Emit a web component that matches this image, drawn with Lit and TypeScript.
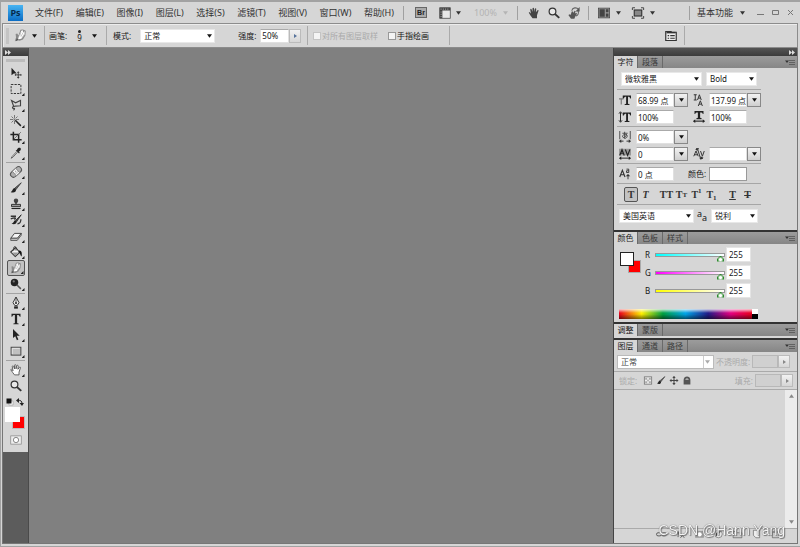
import { LitElement, html, css, svg, nothing } from "lit";
import { customElement, property } from "lit/decorators.js";

const glyphs: Record<string, unknown> = {
  move: svg`<path d="M2 1v10l3-2.500h4z" fill="#222"/><path d="M11 7v7M7.500 10.500h7" stroke="#333" stroke-width="1.200"/><path d="M11 5.500l1.800 2.200H9.200zM11 15.500l1.800-2.200H9.200zM6 10.500l2-1.600v3.200zM16 10.500l-2-1.600v3.200z" fill="#333"/>`,
  marquee: svg`<rect x="1.500" y="2" width="13" height="12" fill="none" stroke="#333" stroke-width="1.300" stroke-dasharray="3 1.500"/>`,
  lasso: svg`<path d="M5 10L2 2l5.500 3L14 2v7l-7 .500-2 .500c-2.500 0-2 3 0 2.500s1 1.500-.500 2.500" fill="none" stroke="#444" stroke-width="1.500"/>`,
  wand: svg`<path d="M7 7l7.500 7.500" stroke="#222" stroke-width="2"/><path d="M6 0v4M6 8v4M0 6h4M8 6h4M2 2l2.500 2.500M10 2L7.500 4.500M2 10l2.500-2.500" stroke="#555"/><circle cx="6" cy="6" r="1.200" fill="#777"/>`,
  crop: svg`<path d="M4.500 1v10.500H15.500M.500 4.500h11V15.500" fill="none" stroke="#222" stroke-width="2"/><path d="M5 11l9.500-9.500" stroke="#555"/>`,
  dropper: svg`<path d="M9 6l-6 6.500-1.500 2.500 2.500-1.500L10 7z" fill="#eee" stroke="#444"/><path d="M7.500 4l4.500 4.500 1-1-1-1.500c4-2 3-6.500-1.500-4.500L9 4z" fill="#222"/>`,
  heal: svg`<g transform="rotate(-42 8 8)"><rect x="-.500" y="4" width="17" height="8" rx="4" fill="#b0b0b0" stroke="#555" stroke-width="1.300"/><rect x="5" y="4" width="6" height="8" fill="#f2f2f2" stroke="#777"/></g><path d="M7 7h1M9 8h1M7.500 9.500h1" stroke="#555"/>`,
  brush: svg`<path d="M15 1L6.500 8l1.500 2z" fill="#666" stroke="#333"/><path d="M6 8c-2 0-2 3-5 5.500C5 15 8.500 13.500 8 10z" fill="#222"/>`,
  stamp: svg`<circle cx="8" cy="3.500" r="3" fill="#444"/><path d="M7 5h2v3.500H7z" fill="#333"/><path d="M2 8.500h12v3H2z" fill="#999" stroke="#333" stroke-width="1.300"/><path d="M2 14h12" stroke="#222" stroke-width="1.500"/>`,
  history: svg`<path d="M15 1L8 8l1 2z" fill="#555" stroke="#222"/><path d="M7 8c-2 1-2 4-5 5 4 1.500 7 0 7-3z" fill="#222"/><path d="M1 3h7M1 6.500c5-2 8-2 5 1M10 13c3 0 4.500-2 4.500-6" fill="none" stroke="#333" stroke-width="1.700"/>`,
  eraser: svg`<path d="M1 11l5-6.500h9L10 11z" fill="#f4f4f4" stroke="#444" stroke-width="1.300"/><path d="M1 11v3h8.500l5.500-7V4.500L10 11z" fill="#bbb" stroke="#444"/>`,
  bucket: svg`<path d="M1 8l6.500-6 5.500 6.500-6 5.500z" fill="#f2f2f2" stroke="#333" stroke-width="1.400"/><path d="M3 8.500h9l-5 4.500z" fill="#999"/><path d="M5 6V3c0-3 3-3 3 0v3" fill="none" stroke="#333" stroke-width="1.300"/><path d="M12 6c4 0 4 3 3.500 8-2-1-1.500-5-4-5z" fill="#111"/>`,
  smudge: svg`<path d="M1 15l1.500-4.500L2 6l2-.500L5.500 8 8 1l3-.500L14.500 2l-.500 6-3 5-4 1.500-3-1z" fill="#8a8a8a"/><path d="M5 12.500L6 9l3-7 2-.500v3l2-2v4.500L9 12z" fill="#fff"/><path d="M8.500 4L7 9M11 4.500L8.500 9.500M13 6l-3 4.500" stroke="#aaa" stroke-width=".8"/><path d="M2 15l1.500-3.500 2 2z" fill="#555"/>`,
  burn: svg`<circle cx="6" cy="6" r="5" fill="#222"/><circle cx="5" cy="4.500" r="1.500" fill="#777"/><path d="M9 9l5.500 5.500" stroke="#555" stroke-width="2"/>`,
  pen: svg`<path d="M8 0L4 7.500l2.500 4h3l2.500-4z" fill="#eee" stroke="#333" stroke-width="1.300"/><path d="M8 1v6" stroke="#333"/><circle cx="8" cy="8" r="1.300" fill="#222"/><path d="M5.500 12.500h5V15.500h-5z" fill="#222"/>`,
  type: svg`<path d="M2 1h12v4h-1c-.400-2-1-2.500-3.500-2.500V12.500c0 1 .500 1.300 2 1.500v1H4.500v-1c1.500-.200 2-.500 2-1.500V2.500C4 2.500 3.400 3 3 5H2z" fill="#222"/>`,
  arrow: svg`<path d="M4 0v12l3-2.500L9.200 15l2-1-2.200-5h4z" fill="#222"/>`,
  shape: svg`<rect x="1.500" y="3" width="13" height="10.500" fill="#c0c0c0" stroke="#444" stroke-width="1.300"/><path d="M3 12V4.500H13" fill="none" stroke="#eee"/>`,
  hand: svg`<path d="M6 14.500C4 12 2.500 10 1 7.500c1-1 2 0 3 1.500L3 3.500C3 2 4.500 2 5 3.500l1 3V2c0-1.500 2-1.500 2 0v4.500l1-4c.500-1.300 2-1 2 .300L10.500 7l2-2.500c1-1 2 0 1.300 1L12 11v3.500z" fill="#fff" stroke="#555" stroke-width="1.200"/>`,
  handDark: svg`<path d="M6 15C4 12 2.500 10 1 7.500c1-1 2 0 3 1.500L3 3.500C3 2 4.500 2 5 3.500l1 3V2c0-1.500 2-1.500 2 0v4.500l1-4c.500-1.300 2-1 2 .300L10.500 7l2-2.500c1-1 2 0 1.300 1L12 11v4z" fill="#444"/>`,
  zoom: svg`<circle cx="6" cy="6" r="4.500" fill="#e8e8e8" stroke="#333" stroke-width="1.600"/><path d="M9.500 9.500l5.500 5" stroke="#333" stroke-width="2.600"/>`,
  rotate: svg`<path d="M4 15.500l-3.500-5 2-1 1 1L5 6l1.700 0 .500 2 1.500-3 1.500.500-1 3 2-1 .700 1.500L9.500 13l-1 2.500z" fill="#555"/><path d="M5 5c1-4.500 6.500-5 9-2M13.500 5c1 3 0 6-3 7" fill="none" stroke="#666" stroke-width="1.500"/><path d="M15.500 0v6H10z" fill="#555"/>`,
  mini: svg`<rect x="6" y="6" width="8" height="8" fill="#fff" stroke="#888"/><rect x="1" y="1" width="10" height="10" fill="#111"/>`,
  swap: svg`<path d="M4 5c5-1 8 1 8 6" fill="none" stroke="#222" stroke-width="2"/><path d="M0 5l6-5v10zM7 10h9l-4 6z" fill="#222"/>`,
  mask: svg`<rect x="1" y="2.500" width="14" height="11" fill="#eee" stroke="#888"/><circle cx="8" cy="8" r="3.500" fill="#fff" stroke="#666"/>`,
  screens: svg`<rect x="1" y="1" width="14" height="14" fill="#e8e8e8" stroke="#444"/><path d="M1 1h14v3.500H1zM1 4h3.500v11H1z" fill="#444"/><path d="M2 2.800h12M2.800 6v8" stroke="#ccc" stroke-dasharray="1.500 1.500"/>`,
  arrange: svg`<rect x=".500" y="1.500" width="15" height="13" fill="#999" stroke="#444"/><path d="M2 3h7v10H2zM10.500 3H14v4h-3.500zM10.500 8.500H14V13h-3.500z" fill="#444"/>`,
  full: svg`<rect x="3" y="4" width="10" height="8" fill="#888" stroke="#333" stroke-width="1.500"/><path d="M.500 4V1H4M12 1h3.500v3M15.500 12v3H12M4 15H.500v-3" fill="none" stroke="#444" stroke-width="1.300"/>`,
  palette: svg`<path d="M1 2h7l1 1h6v11H1z" fill="#eee" stroke="#333" stroke-width="1.600"/><path d="M2 3.500h12" stroke="#333" stroke-width="2"/><path d="M3.500 7.500h2M3.500 11h2M7 7.500h6M7 11h6" stroke="#333" stroke-width="1.400"/>`,
  size: svg`<path d="M5 2h11v4h-1c-.300-2-1-2.500-3-2.500V13l2 .500v1H7.500v-1l2-.500V3.500c-2 0-2.700.500-3 2.500H5z" fill="#222"/><path d="M0 6.500h6M3 6.500V14" stroke="#777" stroke-width="1.500"/>`,
  vscale: svg`<path d="M5 2h11v4h-1c-.300-2-1-2.500-3-2.500V13l2 .500v1H7.500v-1l2-.500V3.500c-2 0-2.700.500-3 2.500H5z" fill="#222"/><path d="M2 2v12M0 3.500L2 1l2 2.500M0 12.500L2 15l2-2.500" fill="none" stroke="#222" stroke-width="1.300"/>`,
  hscale: svg`<path d="M2 0h12v4h-1c-.300-2-1-2-3.500-2v7l2 .500V11h-7V9.500l2-.500V2C4 2 3.300 2 3 4H2z" fill="#222"/><path d="M1 13.500h14" stroke="#222" stroke-width="1.500"/><path d="M0 13.500l3-2.500v5zM16 13.500L13 11v5z" fill="#222"/>`,
  leading: svg`<path d="M3 1v7M1 1h4M1 8h4M6 8l2.500-7L11 8M7 5.500h3M7 16l2.800-7 2.700 7M8 13.500h3.500" fill="none" stroke="#333" stroke-width="1.300"/>`,
  tsume: svg`<path d="M1 0v11M15 0v11M4.500 3h7M7.500 1v8M5 8c-2-4 7-4 6-1-.500 2-2 3-4 3M10 4c0 3-2 5-5 5" fill="none" stroke="#444" stroke-width="1.200"/><path d="M1 13.500h5M10 13.500h5" stroke="#333" stroke-width="1.300"/><path d="M0 13.500L3 11v5zM16 13.500L13 11v5z" fill="#333"/>`,
  tracking: svg`<rect y="1" width="16" height="9" fill="#999"/><path d="M1 10l3-8 3 8M2 7h4M8.500 2l3 8 3-8" fill="none" stroke="#222" stroke-width="1.500"/><path d="M1 13.500h14" stroke="#222" stroke-width="1.300"/><path d="M0 13.500L3 11v5zM16 13.500L13 11v5z" fill="#222"/>`,
  kern: svg`<path d="M1 11l3-7 3 7M2 9h4M10 4l2.500 7L15 4M6 1l4 13M8 1H4M9 14h4" fill="none" stroke="#333" stroke-width="1.300"/><path d="M3 2l3-2v4zM14 13l-4-2v5z" fill="#333"/>`,
  baseline: svg`<path d="M1 12l3.500-9L8 12M2.500 9h4" fill="none" stroke="#333" stroke-width="1.500"/><path d="M10 1.500h3V6h-3V3.700h3M12 9v6" fill="none" stroke="#333" stroke-width="1.200"/><path d="M9 11l3-3 3 3z" fill="#333"/>`,
  pixels: svg`<rect x="1.500" y="1.500" width="13" height="13" fill="#eee" stroke="#777" stroke-width="1.500"/><path d="M3 3h3.500v3.500H3zM9.500 3H13v3.500H9.500zM6.500 6.500h3v3h-3zM3 9.500h3.500V13H3zM9.500 9.500H13V13H9.500z" fill="#aaa"/>`,
  cross: svg`<path d="M8 1v14M1 8h14" stroke="#444" stroke-width="1.800"/><path d="M8 0l3 3.500H5zM8 16l3-3.500H5zM0 8l3.500-3v6zM16 8l-3.500-3v6z" fill="#444"/>`,
  lock: svg`<path d="M2 15V7c0-8 12-8 12 0v8z" fill="#555"/><path d="M5 7c0-4 6-4 6 0z" fill="#aaa"/>`,
  link: svg`<rect x="0" y="6" width="8" height="5" rx="2.500" fill="none" stroke="#555" stroke-width="1.500"/><rect x="8" y="6" width="8" height="5" rx="2.500" fill="none" stroke="#555" stroke-width="1.500"/>`,
  fx: svg`<path d="M8 2C5 1 5 6 4 13M2 6h5M8 7l6 7M14 7l-6 7" fill="none" stroke="#555" stroke-width="1.500"/>`,
  addMask: svg`<rect x="1" y="3" width="14" height="11" fill="#999"/><circle cx="8" cy="8.500" r="3.500" fill="#fff"/>`,
  adjust: svg`<circle cx="8" cy="8" r="6" fill="#eee" stroke="#555"/><path d="M4 12A6 6 0 0 1 12 4z" fill="#444"/>`,
  folder: svg`<path d="M1 14V4h5l1 2h8v8z" fill="#ccc" stroke="#555"/>`,
  page: svg`<path d="M3 2h10v12H7l-4-4z" fill="#eee" stroke="#555"/>`,
  trash: svg`<path d="M3 5h10v9H3zM1 4.500h14M6 2h4" fill="#ccc" stroke="#555"/>`,
};

@customElement("ps-icon")
export class PsIcon extends LitElement {
  static styles = css`
    :host { display: inline-flex; flex: none; width: 12px; height: 12px; }
    svg { width: 100%; height: 100%; display: block; overflow: visible; }
  `;
  @property() name = "";
  render() {
    return html`<svg viewBox="0 0 16 16" fill="none" aria-hidden="true">${glyphs[this.name] ?? nothing}</svg>`;
  }
}

const menus = ["文件(F)", "编辑(E)", "图像(I)", "图层(L)", "选择(S)", "滤镜(T)", "视图(V)", "窗口(W)", "帮助(H)"];

const toolGroups: string[][] = [
  ["move", "marquee", "lasso", "wand", "crop", "dropper"],
  ["heal", "brush", "stamp", "history", "eraser", "bucket", "smudge", "burn"],
  ["pen", "type", "arrow", "shape"],
  ["hand", "zoom"],
];

const channels = [
  { name: "R", tone: "cyan" },
  { name: "G", tone: "magenta" },
  { name: "B", tone: "yellow" },
];

const caret = html`<svg class="caret" viewBox="0 0 6 4" aria-hidden="true"><path d="M0 0h6L3 4z" fill="currentColor"/></svg>`;

@customElement("app-root")
export class AppRoot extends LitElement {
  static styles = css`
    * { box-sizing: border-box; }
    :host {
      box-sizing: border-box;
      display: flex; flex-direction: column; height: 100vh; min-height: 540px;
      background: #d6d6d6; color: #161616; overflow: hidden;
      border: solid #a2a2a2; border-width: 2px 0 1px 1px; padding: 0 2px 2px 1px;
      font: 8px/12px "Noto Sans", "Noto Sans CJK SC", sans-serif;
    }
    button, input, select { font: inherit; color: inherit; margin: 0; padding: 0; border: 0; border-radius: 0; background: none; min-width: 0; }
    button { display: inline-flex; align-items: center; justify-content: center; white-space: nowrap; }
    .caret { width: 5px; height: 4px; flex: none; display: block; }
    .rule { flex: none; width: 1px; height: 14px; background: #a0a0a0; }

    .menubar { display: flex; align-items: center; height: 21px; flex: none; padding-left: 6px; font-size: 9px; color: #333; }
    .logo { width: 15px; height: 16px; flex: none; background: linear-gradient(#49b4f2, #0a6cc4); color: #062a4c; font: bold 9px/15px "Open Sans", sans-serif; text-align: center; }
    .menus { display: flex; justify-content: space-between; margin: 0 9px 0 12px; width: 359px; flex: none; }
    .bar-group { display: flex; align-items: center; flex: none; }
    .bridge { width: 12px; height: 11px; border: 1px solid #666; background: #aaa; font: bold 7px/9px "Liberation Sans", sans-serif; color: #222; margin: 0 12px 0 11px; }
    .view { gap: 5px; }
    .percent { margin-left: 13px; gap: 6px; color: #b4b4b4; }
    .nav-rule { margin-left: 9px; }
    .nav-tools { gap: 8px; padding: 0 8px 0 10px; }
    .screen { gap: 6px; padding-left: 9px; }
    .screen .second { margin-left: 5px; }
    .workspace-menu { margin-left: auto; gap: 7px; }
    .workspace-menu button { gap: 7px; }
    .window-buttons { display: flex; gap: 8px; margin: 0 4px 0 12px; }
    .window-buttons svg { width: 7px; height: 7px; }

    .options { display: flex; align-items: stretch; height: 25px; flex: none; border: 1px solid #8c8c8c; box-shadow: inset 1px 1px #ececec; }
    .seg { display: flex; align-items: center; flex: none; border-right: 1px solid #aaa; margin: 2px 0; }
    .seg-tool { width: 42px; gap: 5px; padding-left: 3px; }
    .seg-tool ps-icon { width: 13px; height: 13px; }
    .grip { width: 3px; height: 16px; background: #c4c4c4; }
    .seg-brush { width: 62px; padding-left: 4px; }
    .tip { display: grid; justify-items: center; margin: 0 10px 0 10px; line-height: 9px; }
    .dot { width: 3px; height: 3px; border-radius: 50%; background: #222; }
    .seg-mode { width: 201px; padding-left: 6px; }
    .seg-mode .select { width: 75px; margin: 0 23px 0 9px; }
    .seg-mode .field { width: 29px; margin-left: 4px; }
    .seg-checks { width: 142px; gap: 10px; padding-left: 5px; }
    .check { display: flex; align-items: center; gap: 1px; white-space: nowrap; }
    .check input { appearance: none; width: 8px; height: 8px; border: 1px solid #999; background: #f4f4f4; }
    .check.off { color: #aaa; }
    .check.off input { border-color: #c4c4c4; }
    .seg-palette { margin-left: auto; width: 20px; }
    .seg-tail { width: 112px; border: 0; }

    .select { display: grid; grid-template-columns: minmax(0, 1fr) 5px; align-items: center; height: 14px; background: #fff; border: 1px solid #e8e8e8; padding-right: 2px; }
    .select select { grid-area: 1 / 1 / 2 / 3; appearance: none; height: 12px; padding-left: 3px; outline: 0; }
    .select .caret { grid-area: 1 / 2; pointer-events: none; }
    .field { height: 14px; background: #fff; border: 1px solid #e0e0e0; border-top-color: #aaa; padding-left: 1px; width: 38px; }
    .combo { display: flex; height: 14px; }
    .drop { width: 14px; height: 14px; border: 1px solid #888; background: linear-gradient(#f2f2f2, #cfcfcf); color: #111; flex: none; }
    .step { width: 12px; height: 14px; border: 1px solid #bbb; background: linear-gradient(#f2f2f2, #d6d6d6); flex: none; }
    .step svg { width: 3px; height: 4px; color: #57739c; }

    .work { display: flex; flex: 1; min-height: 0; border-right: 1px solid #777; border-left: 1px solid #777; border-bottom: 1px solid #777; }
    .dock { height: 8px; flex: none; background: linear-gradient(#555, #3c3c3c); color: #ddd; display: flex; align-items: center; padding: 0 2px; }
    .dock svg { width: 6px; height: 5px; }
    .dock.end { justify-content: flex-end; }
    .left { width: 26px; flex: none; background: #5c5c5c; border-right: 1px solid #4a4a4a; }
    .tools { background: #d6d6d6; padding: 3px 3px 4px 3px; display: grid; }
    .tools .handle { height: 3px; background: #bcbcbc; margin-bottom: 3px; }
    .tool-group { display: grid; justify-items: center; }
    .tool-group + .tool-group { border-top: 1px solid #a2a2a2; margin-top: 1px; padding-top: 1px; }
    .tool { position: relative; width: 18px; height: 16px; }
    .tool.active { border: 1px solid #555; border-radius: 2px; background: #c2c2c2; }
    .flyout { position: absolute; right: 0; bottom: 1px; width: 3px; height: 3px; background: #222; clip-path: polygon(100% 0, 100% 100%, 0 100%); }
    .minis { display: flex; justify-content: space-between; padding: 4px 1px 0 0; }
    .minis ps-icon { width: 8px; height: 8px; }
    .swatches { position: relative; height: 22px; margin: 1px 0 3px; }
    .swatch { position: absolute; border: 1px solid #bbb; }
    .swatch.back { width: 13px; height: 13px; right: 0; bottom: 0; background: #f00; }
    .swatch.front { width: 15px; height: 15px; left: -1px; top: 0; background: #fff; border-color: #fff; }
    .mask { height: 16px; }
    .canvas { flex: 1; min-width: 0; background: #808080; }

    .right { width: 184px; flex: none; display: flex; flex-direction: column; background: #d6d6d6; border-left: 1px solid #444; }
    .panel { display: flex; flex-direction: column; flex: none; border-bottom: 2px solid #333; }
    .tabs { display: flex; height: 12px; flex: none; background: linear-gradient(#9c9c9c, #868686); align-items: stretch; }
    .tab { width: 25px; border-right: 1px solid #6a6a6a; color: #3a3a3a; }
    .tab.on { width: 24px; background: #d6d6d6; color: #222; }
    .flymenu { margin-left: auto; width: 14px; }
    .flymenu svg { width: 10px; height: 6px; }

    .character { height: 162px; padding-left: 3px; }
    .block { width: 144px; border-bottom: 1px solid #a6a6a6; padding: 3px 0 2px 2px; display: grid; gap: 3px; }
    .block:last-child { border: 0; padding-top: 4px; }
    .faces { grid-template-columns: 81px 51px; gap: 4px; padding: 4px 0 3px 4px; }
    .pair { display: grid; grid-template-columns: 17px 52px 21px 52px; align-items: center; height: 14px; }
    .pair > ps-icon:nth-of-type(2) { justify-self: center; }
    .pair > span { white-space: nowrap; }
    .well { width: 38px; height: 14px; border: 1px solid #999; background: #fff; }
    .styles { display: flex; height: 15px; padding-left: 5px; font-family: "Liberation Serif", serif; font-weight: bold; font-size: 10px; color: #333; }
    .styles button { width: 15px; }
    .styles .on { width: 14px; border: 1px solid #555; border-radius: 2px; background: #c2c2c2; }
    .styles .gap { margin-left: 6px; }
    .styles small { font-size: 7px; }
    .styles .up { align-self: flex-start; line-height: 8px; }
    .styles .down { align-self: flex-end; line-height: 8px; }
    .langs { grid-template-columns: 75px 11px 47px; gap: 3px; padding-left: 2px; }
    .aa { display: flex; font-size: 9px; line-height: 10px; }
    .aa span:last-child { align-self: flex-end; }

    .colour { height: 78px; padding: 3px 0 0 5px; display: flex; flex-direction: column; }
    .mixer { display: flex; }
    .chips { position: relative; width: 26px; height: 30px; flex: none; }
    .chip { position: absolute; width: 14px; height: 14px; }
    .chip.b { left: 9px; top: 13px; width: 13px; height: 13px; background: #f00; border: 1px solid #aaa; }
    .chip.f { left: 1px; top: 5px; background: #fff; border: 1px solid #222; }
    .rows { display: grid; gap: 3px; }
    .row { display: grid; grid-template-columns: 8px 73px 25px; height: 15px; align-items: center; }
    .row .field { width: 25px; height: 15px; border-color: #e4e4e4; padding-left: 2px; }
    .row input[type="range"] { appearance: none; width: 70px; height: 12px; margin-left: 2px; }
    .row input::-webkit-slider-runnable-track { height: 4px; border: 1px solid #999; }
    .cyan::-webkit-slider-runnable-track { background: linear-gradient(90deg, #0ff, #fff); }
    .magenta::-webkit-slider-runnable-track { background: linear-gradient(90deg, #f0f, #fff); }
    .yellow::-webkit-slider-runnable-track { background: linear-gradient(90deg, #ff0, #fff); }
    .row input::-webkit-slider-thumb { appearance: none; width: 7px; height: 6px; margin-top: 2px; border: 0; border-radius: 0; background: radial-gradient(circle at 50% 60%, #fff 1px, #2e8b2e 3px); clip-path: polygon(50% 0, 100% 60%, 100% 100%, 0 100%, 0 60%); }
    .ramp { display: flex; width: 139px; height: 10px; margin-top: 11px; }
    .spectrum { flex: 1; background: linear-gradient(#fffc, #fff0 40%, #0000 50%, #0008), linear-gradient(90deg, #e8001c, #fff000 17%, #00a040 33%, #00a4e8 50%, #221c88 67%, #e40080 84%, #e8001c); }
    .bw { width: 6px; background: linear-gradient(#fff 50%, #000 50%); }

    .collapsed { border-bottom-width: 0; padding-bottom: 2px; }
    .layers { flex: 1; min-height: 0; border: 0; border-top: 2px solid #333; }
    .lrow { display: flex; align-items: center; height: 18px; flex: none; border-bottom: 1px solid #aaa; padding-left: 5px; color: #aaa; }
    .lrow.first { height: 20px; padding-left: 3px; }
    .lrow .select { width: 97px; padding-right: 3px; border-color: #bbb; margin-right: 2px; color: #aaa; }
    .lrow .select select { color: #444; background: linear-gradient(90deg, #ccc, #ccc) right 6px top / 1px 12px no-repeat; }
    .lrow .label { margin-left: auto; }
    .lrow .field { width: 26px; height: 13px; background: #d0d0d0; border: 1px solid #b8b8b8; margin-left: 2px; }
    .lrow .step { height: 13px; margin-right: 4px; }
    .lrow .step svg { color: #888; }
    .locks { display: flex; gap: 3px; margin-left: 6px; }
    .locks ps-icon { width: 10px; height: 9px; }
    .list { flex: 1; display: flex; justify-content: flex-end; min-height: 0; border-bottom: 1px solid #aaa; }
    .scroll { width: 12px; background: #ececec; display: flex; flex-direction: column; justify-content: space-between; align-items: center; padding: 4px 0; color: #888; }
    .scroll svg:first-child { transform: rotate(180deg); }
    .foot { display: flex; gap: 8px; height: 14px; flex: none; align-items: flex-start; padding-left: 42px; }
    .foot ps-icon { width: 11px; height: 10px; }
    .watermark { position: fixed; right: 15px; bottom: 8px; font: 14px/18px "Liberation Sans", sans-serif; color: #f4f4f4; text-shadow: 0 0 1px #444, 1px 1px 1px #777; white-space: nowrap; pointer-events: none; }
  `;

  private chevrons = html`<svg viewBox="0 0 6 5" aria-hidden="true"><path d="M0 0l3 2.500L0 5zM3 0l3 2.500L3 5z" fill="currentColor"/></svg>`;

  private select(label: string, value: string, disabled = false) {
    return html`<div class="select"><select aria-label=${label} ?disabled=${disabled}><option>${value}</option></select>${caret}</div>`;
  }
  private step(label: string) {
    return html`<button class="step" aria-label=${label}><svg viewBox="0 0 3 4"><path d="M0 0l3 2-3 2z" fill="currentColor"/></svg></button>`;
  }
  private combo(label: string, value: string) {
    return html`<div class="combo"><input class="field" aria-label=${label} .value=${value}><button class="drop" aria-label="${label}">${caret}</button></div>`;
  }
  private tabs(names: string[]) {
    return html`<div class="tabs" role="tablist">
      ${names.map((n, i) => html`<button class="tab ${i ? "" : "on"}" role="tab" aria-selected=${i ? "false" : "true"}>${n}</button>`)}
      <button class="flymenu" aria-label="面板菜单"><svg viewBox="0 0 10 6"><path d="M0 1.500h4L2 4zM4 1h6v.6H4zM4 3h6v.6H4zM4 5h6v.6H4z" fill="#333"/></svg></button>
    </div>`;
  }

  private menubar() {
    return html`<header class="menubar">
      <div class="logo">Ps</div>
      <nav class="menus">${menus.map((m) => html`<button>${m}</button>`)}</nav>
      <span class="rule"></span>
      <button class="bridge">Br</button>
      <div class="bar-group view"><ps-icon name="screens"></ps-icon>${caret}</div>
      <div class="bar-group percent"><span>100%</span>${caret}</div>
      <span class="rule nav-rule"></span>
      <div class="bar-group nav-tools"><ps-icon name="handDark"></ps-icon><ps-icon name="zoom"></ps-icon><ps-icon name="rotate"></ps-icon></div>
      <span class="rule"></span>
      <div class="bar-group screen"><ps-icon name="arrange"></ps-icon>${caret}<ps-icon class="second" name="full"></ps-icon>${caret}</div>
      <div class="bar-group workspace-menu"><span class="rule"></span><button>基本功能 ${caret}</button></div>
      <div class="window-buttons">
        <button aria-label="最小化"><svg viewBox="0 0 7 7"><path d="M0 5.500h7" stroke="#777"/></svg></button>
        <button aria-label="最大化"><svg viewBox="0 0 7 7"><path d="M.500 1.500h6v4h-6z" fill="none" stroke="#777"/></svg></button>
        <button aria-label="关闭"><svg viewBox="0 0 7 7"><path d="M1 1l5 5M6 1L1 6" stroke="#777"/></svg></button>
      </div>
    </header>`;
  }

  private options() {
    return html`<section class="options">
      <div class="seg seg-tool"><span class="grip"></span><ps-icon name="smudge"></ps-icon>${caret}</div>
      <div class="seg seg-brush"><span>画笔:</span><span class="tip"><i class="dot"></i>9</span>${caret}</div>
      <div class="seg seg-mode"><span>模式:</span>${this.select("模式", "正常")}
        <label for="strength">强度:</label><input id="strength" class="field" value="50%">${this.step("强度")}</div>
      <div class="seg seg-checks">
        <label class="check off"><input type="checkbox" disabled>对所有图层取样</label>
        <label class="check"><input type="checkbox">手指绘画</label>
      </div>
      <div class="seg seg-palette"><ps-icon name="palette"></ps-icon></div>
      <div class="seg seg-tail"></div>
    </section>`;
  }

  private toolbox() {
    return html`<aside class="left">
      <div class="dock">${this.chevrons}</div>
      <div class="tools">
        <div class="handle"></div>
        ${toolGroups.map((g) => html`<div class="tool-group">${g.map((t) => html`
          <button class="tool ${t === "smudge" ? "active" : ""}" aria-label=${t}><ps-icon name=${t}></ps-icon>${t === "move" || t === "zoom" ? nothing : html`<i class="flyout"></i>`}</button>`)}</div>`)}
        <div class="minis"><ps-icon name="mini"></ps-icon><ps-icon name="swap"></ps-icon></div>
        <div class="swatches"><span class="swatch back"></span><span class="swatch front"></span></div>
        <button class="mask" aria-label="快速蒙版"><ps-icon name="mask"></ps-icon></button>
      </div>
    </aside>`;
  }

  private character() {
    return html`<section class="panel">
      ${this.tabs(["字符", "段落"])}
      <div class="character">
        <div class="block faces">${this.select("字体", "微软雅黑")}${this.select("字形", "Bold")}</div>
        <div class="block">
          <div class="pair"><ps-icon name="size"></ps-icon>${this.combo("字号", "68.99 点")}<ps-icon name="leading"></ps-icon>${this.combo("行距", "137.99 点")}</div>
          <div class="pair"><ps-icon name="vscale"></ps-icon><input class="field" aria-label="垂直缩放" value="100%"><ps-icon name="hscale"></ps-icon><input class="field" aria-label="水平缩放" value="100%"></div>
        </div>
        <div class="block">
          <div class="pair"><ps-icon name="tsume"></ps-icon>${this.combo("比例间距", "0%")}</div>
          <div class="pair"><ps-icon name="tracking"></ps-icon>${this.combo("字距", "0")}<ps-icon name="kern"></ps-icon>${this.combo("字偶间距", "")}</div>
        </div>
        <div class="block">
          <div class="pair"><ps-icon name="baseline"></ps-icon><input class="field" aria-label="基线偏移" value="0 点"><span>颜色:</span><button class="well" aria-label="颜色"></button></div>
        </div>
        <div class="block"><div class="styles">
          <button class="on">T</button><button><i>T</i></button>
          <button class="gap">TT</button><button>T<small>T</small></button><button>T<small class="up">1</small></button><button>T<small class="down">1</small></button>
          <button class="gap"><u>T</u></button><button><s>T</s></button>
        </div></div>
        <div class="block langs">${this.select("语言", "美国英语")}<span class="aa"><span>a</span><span>a</span></span>${this.select("消除锯齿", "锐利")}</div>
      </div>
    </section>`;
  }

  private colour() {
    return html`<section class="panel">
      ${this.tabs(["颜色", "色板", "样式"])}
      <div class="colour">
        <div class="mixer">
          <div class="chips"><span class="chip b"></span><span class="chip f"></span></div>
          <div class="rows">${channels.map((c) => html`<div class="row"><label for=${c.name}>${c.name}</label>
            <input id=${c.name} class=${c.tone} type="range" max="255" value="255"><input class="field" aria-label=${c.name} value="255"></div>`)}</div>
        </div>
        <div class="ramp"><span class="spectrum"></span><span class="bw"></span></div>
      </div>
    </section>`;
  }

  private layers() {
    return html`<section class="panel layers">
      ${this.tabs(["图层", "通道", "路径"])}
      <div class="lrow first">${this.select("混合模式", "正常")}<label for="opacity">不透明度:</label><input id="opacity" class="field" disabled>${this.step("不透明度")}</div>
      <div class="lrow"><span>锁定:</span>
        <span class="locks"><ps-icon name="pixels"></ps-icon><ps-icon name="brush"></ps-icon><ps-icon name="cross"></ps-icon><ps-icon name="lock"></ps-icon></span>
        <label class="label" for="fill">填充:</label><input id="fill" class="field" disabled>${this.step("填充")}</div>
      <div class="list"><div class="scroll">${caret}${caret}</div></div>
      <div class="foot">${["link", "fx", "addMask", "adjust", "folder", "page", "trash"].map((n) => html`<ps-icon name=${n}></ps-icon>`)}</div>
    </section>`;
  }

  render() {
    return html`${this.menubar()}${this.options()}
      <main class="work">
        ${this.toolbox()}
        <div class="canvas"></div>
        <aside class="right">
          <div class="dock end">${this.chevrons}</div>
          ${this.character()}${this.colour()}
          <section class="panel collapsed">${this.tabs(["调整", "蒙版"])}</section>
          ${this.layers()}
        </aside>
      </main>
      <div class="watermark">CSDN @Hann Yang</div>`;
  }
}
